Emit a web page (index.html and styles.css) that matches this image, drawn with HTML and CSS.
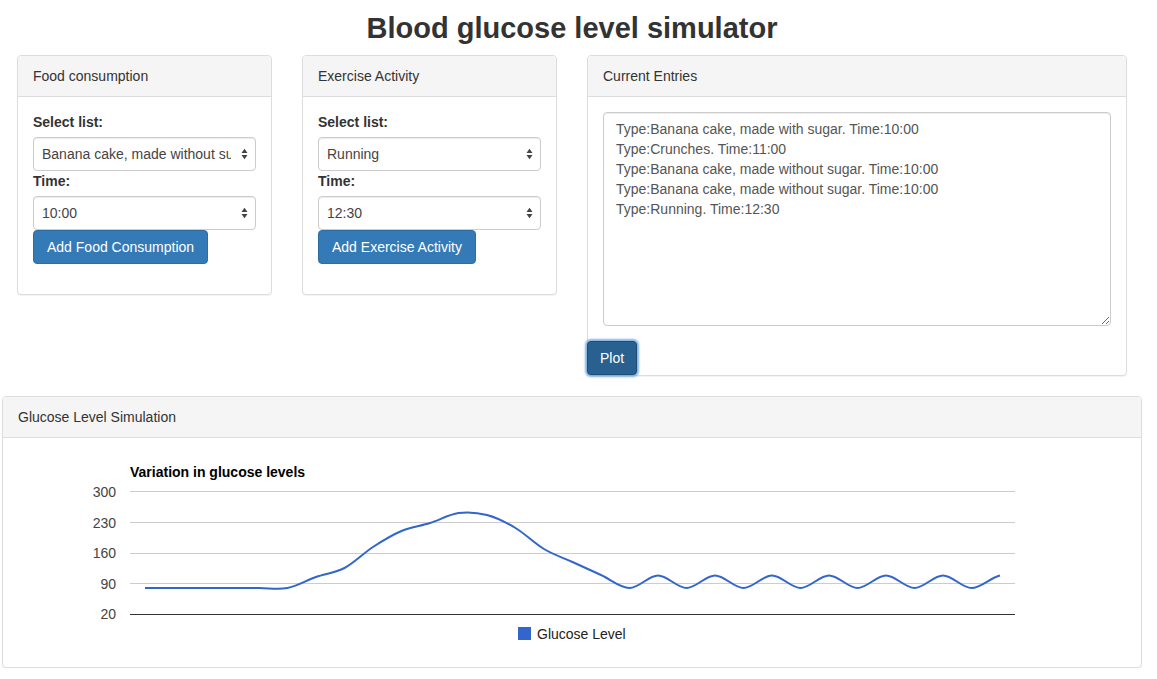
FILE: index.html
```html
<!DOCTYPE html>
<html lang="en">
<head>
<meta charset="utf-8">
<title>Blood glucose level simulator</title>
<link rel="stylesheet" href="styles.css">
</head>
<body>
<div class="container">
  <h1 class="title">Blood glucose level simulator</h1>
  <div class="row">
    <div class="col">
      <div class="panel">
        <div class="panel-heading">Food consumption</div>
        <div class="panel-body form">
          <label class="form-label">Select list:</label>
          <div class="select">
            <span class="select-text">Banana cake, made without sugar</span>
            <svg class="select-arrows" width="7" height="12" viewBox="0 0 7 12"><path d="M0.5 5 L3.5 0.8 L6.5 5 Z M0.5 7 L3.5 11.2 L6.5 7 Z"/></svg>
          </div>
          <label class="form-label">Time:</label>
          <div class="select">
            <span class="select-text">10:00</span>
            <svg class="select-arrows" width="7" height="12" viewBox="0 0 7 12"><path d="M0.5 5 L3.5 0.8 L6.5 5 Z M0.5 7 L3.5 11.2 L6.5 7 Z"/></svg>
          </div>
          <button class="btn btn-primary btn-add">Add Food Consumption</button>
        </div>
      </div>
    </div>
    <div class="col">
      <div class="panel">
        <div class="panel-heading">Exercise Activity</div>
        <div class="panel-body form">
          <label class="form-label">Select list:</label>
          <div class="select">
            <span class="select-text">Running</span>
            <svg class="select-arrows" width="7" height="12" viewBox="0 0 7 12"><path d="M0.5 5 L3.5 0.8 L6.5 5 Z M0.5 7 L3.5 11.2 L6.5 7 Z"/></svg>
          </div>
          <label class="form-label">Time:</label>
          <div class="select">
            <span class="select-text">12:30</span>
            <svg class="select-arrows" width="7" height="12" viewBox="0 0 7 12"><path d="M0.5 5 L3.5 0.8 L6.5 5 Z M0.5 7 L3.5 11.2 L6.5 7 Z"/></svg>
          </div>
          <button class="btn btn-primary btn-add">Add Exercise Activity</button>
        </div>
      </div>
    </div>
    <div class="col">
      <div class="panel entries-panel">
        <div class="panel-heading">Current Entries</div>
        <div class="panel-body">
          <textarea class="entries" readonly>Type:Banana cake, made with sugar. Time:10:00
Type:Crunches. Time:11:00
Type:Banana cake, made without sugar. Time:10:00
Type:Banana cake, made without sugar. Time:10:00
Type:Running. Time:12:30</textarea>
        </div>
        <button class="btn btn-plot">Plot</button>
      </div>
    </div>
  </div>
  <div class="panel chart-panel">
    <div class="panel-heading">Glucose Level Simulation</div>
    <div class="panel-body">
      <svg class="chart" width="1108" height="199" viewBox="0 0 1108 199">
        <g transform="translate(-18,-453)">
          <text class="chart-title" x="130" y="477">Variation in glucose levels</text>
          <g class="grid">
            <line x1="130" y1="491.5" x2="1015" y2="491.5"/>
            <line x1="130" y1="522.5" x2="1015" y2="522.5"/>
            <line x1="130" y1="553.5" x2="1015" y2="553.5"/>
            <line x1="130" y1="583.5" x2="1015" y2="583.5"/>
          </g>
          <line class="baseline" x1="130" y1="614.5" x2="1015" y2="614.5"/>
          <g class="axis-labels">
            <text x="116" y="496.5">300</text>
            <text x="116" y="527.5">230</text>
            <text x="116" y="558">160</text>
            <text x="116" y="588.5">90</text>
            <text x="116" y="619">20</text>
          </g>
          <path class="series" d="M145 588 L259 588 C268.5 588 278 589.8 287.5 588 C297 586.2 306.5 580.3 316 577 C325.5 573.7 335 573 344.5 568 C354 563 363.5 553.2 373 547 C382.5 540.8 392 535 401.5 531 C411 527 420.5 526 430 523 C439.5 520 449 514.3 458.5 513 C468 511.7 477.5 512.5 487 515 C496.5 517.5 506 522.3 515.5 528 C525 533.7 534.5 543.3 544 549 C553.5 554.7 563 557.7 572.5 562 C582 566.3 591.5 570.7 601 575 C610.5 579.3 620 587.9 629.5 588 C639 588.1 648.5 575.5 658 575.5 S 677 588 686.5 588 S 705.5 575.5 715 575.5 S 734 588 743.5 588 S 762.5 575.5 772 575.5 S 791 588 800.5 588 S 819.5 575.5 829 575.5 S 848 588 857.5 588 S 876.5 575.5 886 575.5 S 905 588 914.5 588 S 933.5 575.5 943 575.5 S 962 588 971.5 588 S 990.5 577.6 1000 575.5"/>
          <rect class="legend-swatch" x="518" y="627" width="13" height="13"/>
          <text class="legend-text" x="537" y="638.5">Glucose Level</text>
        </g>
      </svg>
    </div>
  </div>
</div>
</body>
</html>
```

FILE: styles.css
```css
* { box-sizing: border-box; }

html, body {
  margin: 0;
  padding: 0;
  background: #fff;
}

body {
  font-family: "Liberation Sans", Arial, Helvetica, sans-serif;
  font-size: 14px;
  line-height: 20px;
  color: #333;
}

.container {
  width: 1140px;
  margin: 0 0 0 2px;
}

.title {
  font-size: 29px;
  font-weight: bold;
  line-height: 32px;
  margin: 12px 0 11px;
  text-align: center;
  color: #333;
}

.row {
  display: grid;
  grid-template-columns: 285px 285px 570px;
  align-items: start;
}

.col {
  padding: 0 15px;
}

.panel {
  background: #fff;
  border: 1px solid #ddd;
  border-radius: 4px;
  box-shadow: 0 1px 1px rgba(0, 0, 0, 0.05);
  margin-bottom: 20px;
}

.panel-heading {
  padding: 10px 15px;
  background: #f5f5f5;
  border-bottom: 1px solid #ddd;
  border-radius: 3px 3px 0 0;
  color: #333;
}

.panel-body {
  padding: 15px;
}

.form {
  display: flex;
  flex-direction: column;
  align-items: flex-start;
}

.form-label {
  display: block;
  font-weight: bold;
  margin-bottom: 5px;
}

.select {
  width: 100%;
  height: 34px;
  display: flex;
  align-items: center;
  padding: 0 7px 0 8px;
  border: 1px solid #ccc;
  border-radius: 4px;
  background: #fff;
  box-shadow: inset 0 1px 1px rgba(0, 0, 0, 0.075);
  color: #444;
}

.select-text {
  flex: 1;
  overflow: hidden;
  white-space: nowrap;
  margin-right: 10px;
}

.select-arrows {
  flex: none;
  fill: #444;
}

.btn {
  display: inline-block;
  padding: 6px 12px;
  font-family: inherit;
  font-size: 14px;
  line-height: 20px;
  border: 1px solid transparent;
  border-radius: 4px;
  color: #fff;
  cursor: pointer;
}

.btn-primary {
  background: #337ab7;
  border-color: #2e6da4;
}

.btn-add {
  margin-bottom: 15px;
  padding: 6px 13px;
}

.entries {
  display: block;
  width: 100%;
  height: 214px;
  padding: 6px 12px;
  font-family: inherit;
  font-size: 14px;
  line-height: 20px;
  color: #555;
  border: 1px solid #ccc;
  border-radius: 4px;
  box-shadow: inset 0 1px 1px rgba(0, 0, 0, 0.075);
  resize: vertical;
  outline: none;
}

.btn-plot {
  position: relative;
  z-index: 1;
  display: block;
  margin-left: -1px;
  background: #286090;
  border-color: #204d74;
  box-shadow: 0 0 2px 2px rgba(91, 157, 217, 0.75);
}

.chart-panel {
  margin-bottom: 0;
}

.chart {
  display: block;
}

.chart-title {
  font-family: "Liberation Sans", Arial, sans-serif;
  font-size: 14px;
  font-weight: bold;
  fill: #000;
}

.grid line {
  stroke: #ccc;
  stroke-width: 1;
}

.baseline {
  stroke: #333;
  stroke-width: 1;
}

.axis-labels text {
  font-family: "Liberation Sans", Arial, sans-serif;
  font-size: 14px;
  fill: #444;
  text-anchor: end;
}

.series {
  fill: none;
  stroke: #3366cc;
  stroke-width: 2;
}

.legend-swatch {
  fill: #3366cc;
}

.legend-text {
  font-family: "Liberation Sans", Arial, sans-serif;
  font-size: 14px;
  fill: #222;
}
```
